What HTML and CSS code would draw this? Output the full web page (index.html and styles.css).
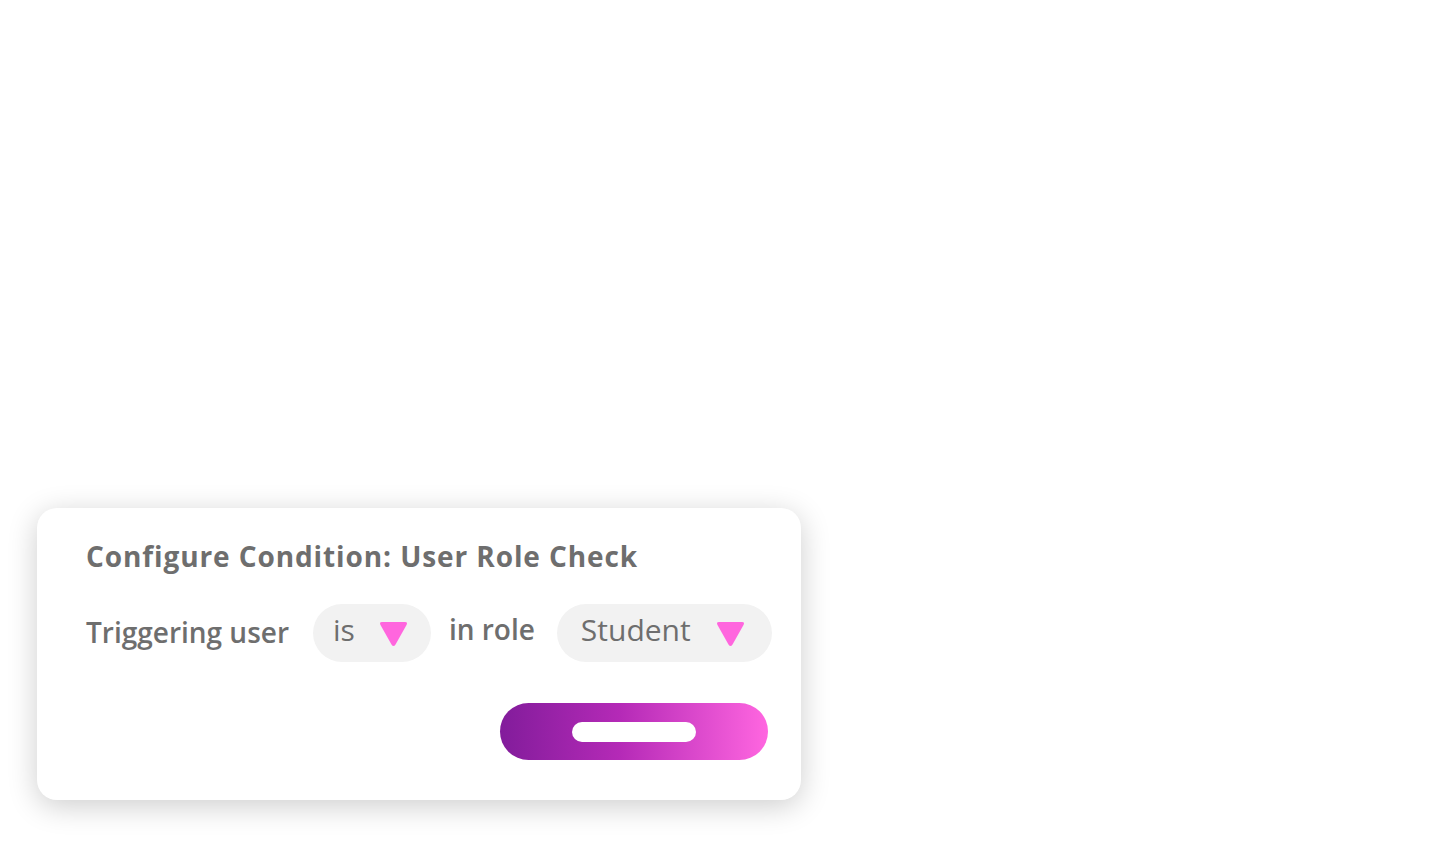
FILE: index.html
```html
<!DOCTYPE html>
<html>
<head>
<meta charset="utf-8">
<link rel="stylesheet" href="styles.css">
</head>
<body>
<div class="page">
  <div class="card">
    <h1 class="title">Configure Condition: User Role Check</h1>
    <div class="row">
      <span class="label label-first">Triggering user</span>
      <div class="select select-is">
        <span class="select-text">is</span>
        <svg class="caret" width="29" height="26" viewBox="0 0 29 26"><path d="M3 1 H26 Q29 1 27.5 4 L16.5 23.5 Q14.5 26.5 12.5 23.5 L1.5 4 Q0 1 3 1 Z" fill="#ff66de"/></svg>
      </div>
      <span class="label label-role">in role</span>
      <div class="select select-role">
        <span class="select-text">Student</span>
        <svg class="caret" width="29" height="26" viewBox="0 0 29 26"><path d="M3 1 H26 Q29 1 27.5 4 L16.5 23.5 Q14.5 26.5 12.5 23.5 L1.5 4 Q0 1 3 1 Z" fill="#ff66de"/></svg>
      </div>
    </div>
    <div class="actions">
      <button class="save"><span class="save-bar"></span></button>
    </div>
  </div>
</div>
</body>
</html>
```
FILE: styles.css
```css
html, body {
  margin: 0;
  padding: 0;
  background: #ffffff;
}
.page {
  padding: 508px 0 60px 37px;
  font-family: "Open Sans", "Noto Sans", sans-serif;
  color: #6e6e6e;
}
.card {
  width: 764px;
  height: 292px;
  box-sizing: border-box;
  background: #ffffff;
  border-radius: 20px;
  box-shadow: 0 6px 30px rgba(0, 0, 0, 0.2);
  padding: 30px 24px 40px 49px;
}
.title {
  margin: 0;
  font-size: 28px;
  line-height: 36px;
  font-weight: 700;
  letter-spacing: 0.9px;
  color: #6e6e6e;
  white-space: nowrap;
}
.row {
  display: flex;
  align-items: center;
  margin-top: 30px;
  height: 58px;
  white-space: nowrap;
}
.row > * {
  flex-shrink: 0;
}
.label {
  font-size: 28px;
  font-weight: 600;
  color: #6e6e6e;
}
.label-first {
  margin-right: 24px;
  padding-bottom: 2px;
}
.label-role {
  margin: 0 22px 0 18px;
  padding-bottom: 8px;
}
.select {
  display: flex;
  align-items: center;
  height: 58px;
  box-sizing: border-box;
  background: #f2f2f2;
  border-radius: 29px;
  padding: 0 23px 0 20px;
  gap: 24px;
}
.select-role {
  padding: 0 27px 0 24px;
  gap: 25px;
}
.select-text {
  font-size: 30px;
  font-weight: 400;
  color: #6e6e6e;
  padding-bottom: 8px;
}
.caret {
  display: block;
  margin-top: 2px;
}
.actions {
  display: flex;
  justify-content: flex-end;
  margin-top: 41px;
  padding-right: 9px;
}
.save {
  width: 268px;
  height: 57px;
  border: none;
  border-radius: 29px;
  background: linear-gradient(90deg, #821c9b 0%, #b52ab7 45%, #ff66e0 100%);
  display: flex;
  align-items: center;
  justify-content: center;
  padding: 0;
}
.save-bar {
  display: block;
  width: 124px;
  height: 20px;
  border-radius: 10px;
  background: #ffffff;
}
```
